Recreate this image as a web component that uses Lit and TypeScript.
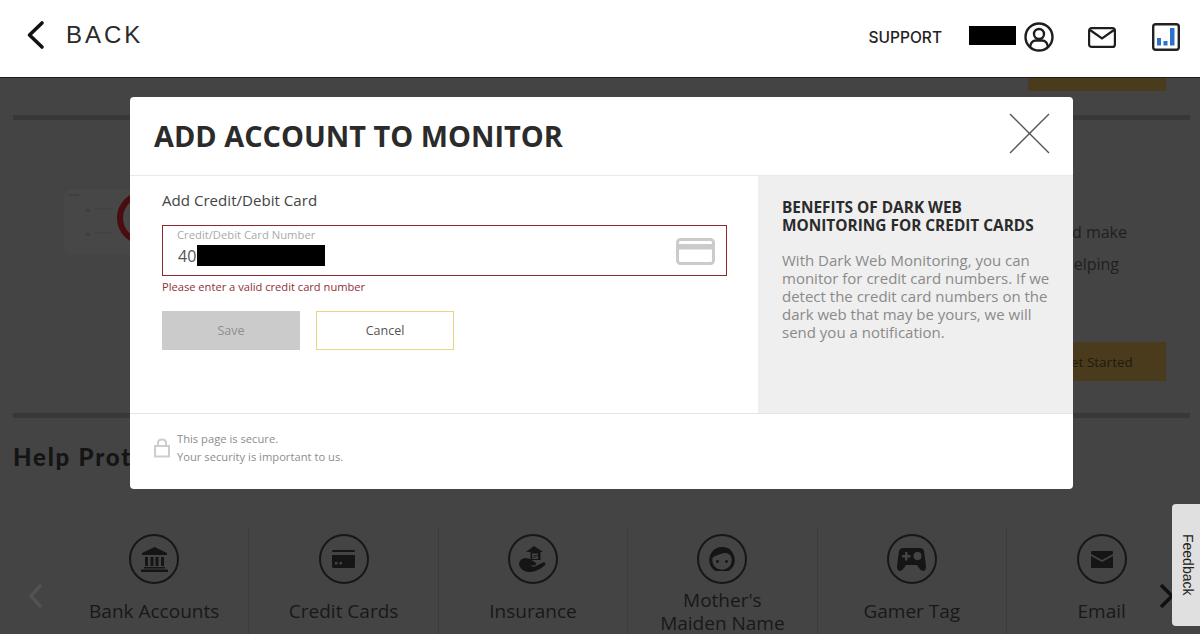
import { LitElement, html, css, svg } from "lit";
import { customElement } from "lit/decorators.js";

const tiles = [
  { label: ["Bank Accounts"], w: 27, h: 25, icon: svg`<path d="M13.500 0 L26 6 V8 H1 V6 Z M4 10h3v9H4zM9.500 10h3v9h-3zM14.500 10h3v9h-3zM20 10h3v9h-3zM3 20h21v1.500H3zM0 22.500h27V25H0z"/>` },
  { label: ["Credit Cards"], w: 23, h: 18, icon: svg`<path d="M1.500 0h20q1.500 0 1.500 1.500V2H0v-.5Q0 0 1.500 0zM0 5h23v11.500q0 1.500-1.500 1.500h-20Q0 18 0 16.500zM3 12v2.500h2.500V12zM7.500 12v2.500H10V12z" fill-rule="evenodd"/>` },
  { label: ["Insurance"], w: 27, h: 26, icon: svg`<path d="M15 0 L24 6 H21.500 V14 H11.500 V6 H7 Z"/><path d="M13 7.500h6v1.800h-4.500v.7H19v3h-6v-1.500h4.500v-.7H13z" fill="#444"/><path d="M0 19 Q0 12 7 12 Q11 12 14 15 L17 17 Q18 19.500 15 19.500 H11 L15 21 L25 16 Q28 17 25 20 Q18 26 10 26 Q3 26 0 19Z"/>` },
  { label: ["Mother's", "Maiden Name"], w: 26, h: 24, icon: svg`<circle cx="13" cy="13" r="11.300" fill="none" stroke="#151515" stroke-width="3"/><path d="M2 11 Q3 0 13 0 Q24 0 24 11 Q20 5.500 15 6 Q7 8 2 11Z"/><circle cx="8.500" cy="14.500" r="1.400"/><circle cx="17.500" cy="14.500" r="1.400"/>` },
  { label: ["Gamer Tag"], w: 29, h: 23, icon: svg`<path d="M6 0h17q3 0 4 3l2 15q0 5-3 5-2 0-4-3l-2-3H9l-2 3q-2 3-4 3-3 0-3-5L2 3q1-3 4-3z"/><path d="M8 4h2.500v3h3v2.500h-3v3H8v-3H5V7h3z" fill="#444"/><circle cx="20.500" cy="8" r="4" fill="#444"/>` },
  { label: ["Email"], w: 22, h: 17, icon: svg`<path d="M1 0h20q1 0 1 1v2L11 9 0 3V1q0-1 1-1zM0 5l11 6 11-6v12H0z"/>` },
];

@customElement("app-root")
export class AppRoot extends LitElement {
  static styles = css`
    :host { display: block; position: relative; width: 1200px; height: 634px; overflow: hidden; background: #444; font-family: "Open Sans", "Noto Sans", sans-serif; }
    * { box-sizing: border-box; }

    header { height: 78px; background: #fff; border-bottom: 1px solid #1e1e1e; display: flex; align-items: center; padding: 0 20px 3px 26px; }
    .back { display: flex; align-items: center; gap: 20px; }
    .back span { font-family: "Liberation Sans", sans-serif; font-size: 24px; letter-spacing: 3px; color: #2a2a2a; line-height: 1; position: relative; top: -2px; }
    .back svg { position: relative; top: -2px; }
    .right { margin-left: auto; display: flex; align-items: center; }
    .support { font-family: "Inter", sans-serif; font-weight: 500; font-size: 15.500px; color: #222; margin-right: 27px; }
    .mask { background: #000; }
    .mask.name { width: 47px; height: 19px; margin-right: 8px; margin-top: -3px; }
    .i-user { margin-right: 34px; }
    .i-mail { margin-right: 36px; }

    .page { padding: 0 10px 0 13px; }
    .topcta { width: 138px; height: 13px; background: #4a3b1d; margin-left: 1015px; }
    .rule { height: 5px; background: #383838; }
    .rule.a { margin-top: 24px; }
    .hero { height: 293px; position: relative; }
    .thumb { position: absolute; left: 52px; top: 70px; width: 90px; height: 64px; background: #474747; border-radius: 5px; box-shadow: 0 0 3px #4a4a4a; }
    .ring { position: absolute; left: 104px; top: 71px; width: 54px; height: 54px; border-radius: 50%; border: 6px solid #4a0d0f; }
    .blurb { position: absolute; font-size: 16px; line-height: 22px; color: #1f1f1f; white-space: nowrap; }
    .blurb.l1 { top: 101px; right: 63px; }
    .blurb.l2 { top: 133px; right: 71px; }
    .cta { position: absolute; left: 1015px; top: 222px; width: 138px; height: 39px; background: #4a3b1d; color: #1f1a10; font-size: 13.500px; display: flex; align-items: center; justify-content: center; }
    h2 { margin: 23px 0 0; font-size: 24px; line-height: 32px; font-family: "Lato", sans-serif; font-weight: 900; letter-spacing: 1.800px; color: #141414; white-space: nowrap; }

    .strip { display: flex; margin-top: 55px; padding-left: 47px; position: relative; }
    .tile { flex: none; width: 189.400px; height: 120px; display: flex; flex-direction: column; align-items: center; border-right: 1px solid #3c3c3c; padding-top: 6px; }
    .tile:last-of-type { border-right: 0; }
    .disc { width: 50px; height: 50px; border-radius: 50%; border: 2px solid #171717; display: flex; align-items: center; justify-content: center; fill: #151515; flex: none; }
    .label { font-size: 19px; line-height: 23px; color: #181818; text-align: center; white-space: nowrap; }
    .label.one { margin-top: 16px; }
    .label.two { margin-top: 5px; }
    .prev, .next { position: absolute; top: 55px; }
    .prev { left: 14px; }
    .next { left: 1146px; }

    .feedback { position: absolute; left: 1172px; top: 504px; width: 28px; height: 122px; background: #e0e0e0; border-radius: 4px 0 0 4px; display: flex; align-items: center; justify-content: center; padding-left: 4px; z-index: 3; }
    .feedback span { writing-mode: vertical-rl; font-family: "Liberation Sans", sans-serif; font-size: 14px; color: #222; }

    .modal { position: absolute; left: 130px; top: 97px; width: 943px; height: 392px; background: #fff; border-radius: 4px; display: flex; flex-direction: column; overflow: hidden; z-index: 2; }
    .m-head { height: 79px; flex: none; display: flex; align-items: center; justify-content: space-between; padding: 0 23px 0 24px; border-bottom: 1px solid #e9e9e9; }
    .m-head svg { margin-bottom: 5px; }
    h1 { margin: 0; font-size: 28.900px; font-weight: 700; color: #2b2b2b; line-height: 1; }
    .m-body { flex: 1; display: flex; min-height: 0; }
    .form { width: 628px; padding: 14px 31px 0 32px; }
    .form-title { font-size: 15.100px; line-height: 20px; color: #444; }
    .field { margin-top: 15px; height: 51px; border: 1px solid #8a2a2c; padding: 2px 11px 0 14px; display: flex; justify-content: space-between; align-items: flex-start; }
    .f-label { font-size: 11.250px; line-height: 14px; color: #aaa; white-space: nowrap; }
    .f-value { display: flex; align-items: center; font-size: 16px; color: #555; height: 21px; margin-top: 3px; padding-left: 1px; }
    .mask.num { width: 128px; height: 21px; margin-left: 1px; }
    .field svg { margin-top: 10px; }
    .err { margin-top: 4px; font-size: 11.130px; line-height: 14px; color: #8f3038; }
    .btns { display: flex; gap: 16px; margin-top: 17px; }
    .btn { width: 138px; height: 39px; display: flex; align-items: center; justify-content: center; font-size: 12.500px; }
    .save { background: #cbcbcb; color: #8f8f8f; }
    .cancel { background: #fff; border: 1px solid #ecd486; color: #555; }
    aside { flex: 1; background: #efefef; padding: 23px 20px 0 24px; }
    aside h3 { margin: 0; font-size: 15.400px; line-height: 18px; font-weight: 700; color: #2b2b2b; white-space: nowrap; }
    aside p { margin: 16px 0 0; font-size: 15px; line-height: 18px; color: #8a8a8a; }
    .m-foot { height: 76px; flex: none; border-top: 1px solid #e4e4e4; display: flex; align-items: center; padding: 0 0 8px 24px; gap: 7px; }
    .m-foot div { font-size: 11.200px; line-height: 18px; color: #8d8d8d; }
  `;

  render() {
    return html`
      <header>
        <div class="back">
          <svg width="20" height="30" viewBox="0 0 20 30"><path d="M16 3 L3.500 15 L16 27" fill="none" stroke="#111" stroke-width="3.600" stroke-linecap="round" stroke-linejoin="round"/></svg>
          <span>BACK</span>
        </div>
        <div class="right">
          <span class="support">SUPPORT</span>
          <div class="mask name"></div>
          <svg class="i-user" width="30" height="30" viewBox="0 0 30 30" fill="none" stroke="#1e1e1e" stroke-width="2.400">
            <circle cx="15" cy="15" r="13.500"/><circle cx="15" cy="12" r="5"/><path d="M6 25 Q7 18.500 12 18.500 H18 Q23 18.500 24 25"/>
          </svg>
          <svg class="i-mail" width="28" height="21" viewBox="0 0 28 21" fill="none" stroke="#1e1e1e" stroke-width="2.200">
            <rect x="1.100" y="1.100" width="25.800" height="18.800" rx="2.500"/><path d="M2 3 L14 11.500 L26 3"/>
          </svg>
          <svg width="28" height="28" viewBox="0 0 28 28">
            <rect x="1.200" y="1.200" width="25.600" height="25.600" rx="2.500" fill="#fff" stroke="#222" stroke-width="2.400"/>
            <rect x="5" y="15" width="4" height="7.500" fill="#2a72d0"/><rect x="11.500" y="18" width="4" height="4.500" fill="#2a72d0"/><rect x="18" y="5" width="4.500" height="17.500" fill="#2a72d0"/>
          </svg>
        </div>
      </header>

      <div class="page">
        <div class="topcta"></div>
        <div class="rule a"></div>
        <div class="hero">
          <div class="thumb">
            <svg width="52" height="64" viewBox="0 0 52 64" fill="#3f3f3f"><path d="M20 22l3-5 3 5zM20 46l3-5 3 5z"/><rect x="4" y="4" width="10" height="2"/><rect x="30" y="18" width="18" height="2" fill="#424242"/><rect x="30" y="42" width="18" height="2" fill="#424242"/></svg>
          </div>
          <div class="ring"></div>
          <div class="blurb l1">and make</div>
          <div class="blurb l2">helping</div>
          <div class="cta">Get Started</div>
        </div>
        <div class="rule"></div>
        <h2>Help Protect</h2>
        <div class="strip">
          <svg class="prev" width="16" height="26" viewBox="0 0 16 26"><path d="M14 2 L4 13 L14 24" fill="none" stroke="#525252" stroke-width="3.500"/></svg>
          ${tiles.map((t) => html`
            <div class="tile">
              <div class="disc"><svg width=${t.w} height=${t.h} viewBox="0 0 ${t.w} ${t.h}">${t.icon}</svg></div>
              <div class="label ${t.label.length > 1 ? "two" : "one"}">${t.label.length > 1 ? html`${t.label[0]}<br>${t.label[1]}` : t.label[0]}</div>
            </div>`)}
          <svg class="next" width="16" height="26" viewBox="0 0 16 26"><path d="M2 2 L13 13 L2 24" fill="none" stroke="#111" stroke-width="3.500"/></svg>
        </div>
      </div>

      <div class="feedback"><span>Feedback</span></div>

      <div class="modal">
        <div class="m-head">
          <h1>ADD ACCOUNT TO MONITOR</h1>
          <svg width="41" height="41" viewBox="0 0 41 41"><path d="M1 1 L40 40 M40 1 L1 40" stroke="#555" stroke-width="1.400"/></svg>
        </div>
        <div class="m-body">
          <div class="form">
            <div class="form-title">Add Credit/Debit Card</div>
            <div class="field">
              <div>
                <div class="f-label">Credit/Debit Card Number</div>
                <div class="f-value">40<div class="mask num"></div></div>
              </div>
              <svg width="39" height="27" viewBox="0 0 39 27" fill="none"><rect x="1.500" y="1.500" width="36" height="24" rx="3" stroke="#cbcbcb" stroke-width="3"/><rect x="2" y="6" width="35" height="5.500" fill="#cbcbcb"/></svg>
            </div>
            <div class="err">Please enter a valid credit card number</div>
            <div class="btns">
              <div class="btn save">Save</div>
              <div class="btn cancel">Cancel</div>
            </div>
          </div>
          <aside>
            <h3>BENEFITS OF DARK WEB<br>MONITORING FOR CREDIT CARDS</h3>
            <p>With Dark Web Monitoring, you can monitor for credit card numbers. If we detect the credit card numbers on the dark web that may be yours, we will send you a notification.</p>
          </aside>
        </div>
        <div class="m-foot">
          <svg width="16" height="20" viewBox="0 0 16 20" fill="none" stroke="#cdcdcd" stroke-width="2"><rect x="1" y="8" width="14" height="10.500"/><path d="M4 8 V5 Q4 1.500 8 1.500 Q12 1.500 12 5 V8"/></svg>
          <div>This page is secure.<br>Your security is important to us.</div>
        </div>
      </div>
    `;
  }
}
